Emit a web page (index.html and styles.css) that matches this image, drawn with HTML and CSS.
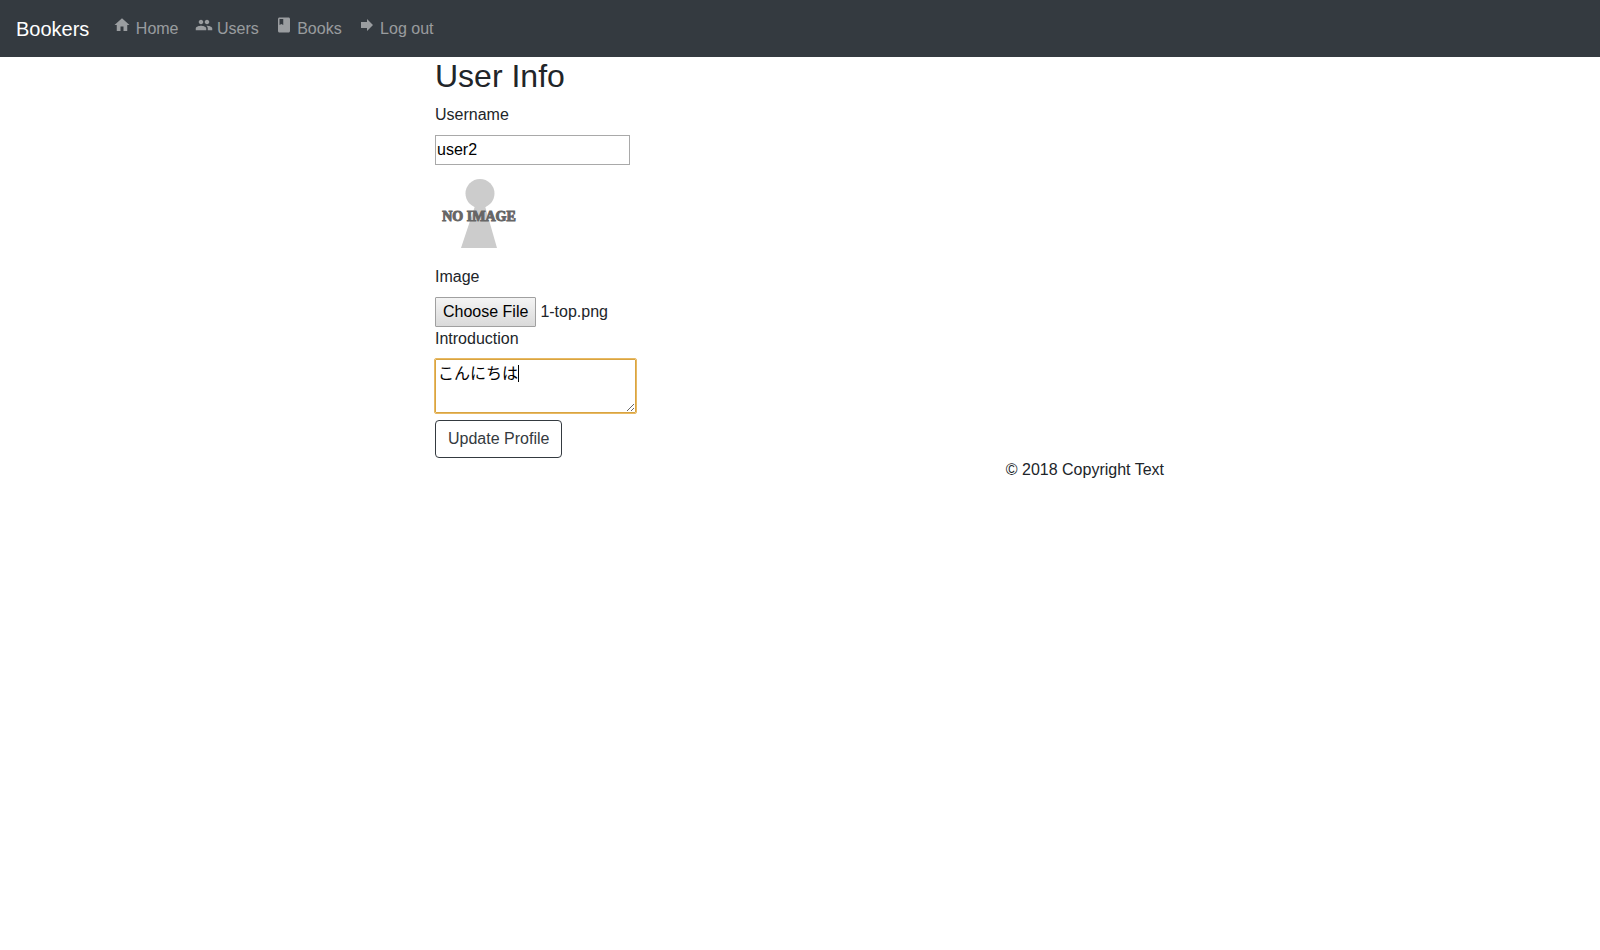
FILE: index.html
```html
<!DOCTYPE html>
<html lang="en">
<head>
<meta charset="utf-8">
<title>Bookers</title>
<link rel="stylesheet" href="styles.css">
</head>
<body>
<header>
  <nav class="navbar">
    <a class="brand" href="#">Bookers</a>
    <ul class="nav-list">
      <li><a class="nav-link" href="#"><svg class="icon" viewBox="0 0 24 24" aria-hidden="true"><path d="M10 20v-6h4v6h5v-8h3L12 3 2 12h3v8z"/></svg> Home</a></li>
      <li><a class="nav-link" href="#"><svg class="icon" viewBox="0 0 24 24" aria-hidden="true"><path d="M16 11c1.66 0 2.99-1.34 2.99-3S17.66 5 16 5s-3 1.340-3 3 1.340 3 3 3zm-8 0c1.660 0 2.990-1.340 2.990-3S9.660 5 8 5 5 6.340 5 8s1.340 3 3 3zm0 2c-2.330 0-7 1.170-7 3.500V19h14v-2.500c0-2.330-4.670-3.500-7-3.500zm8 0c-.29 0-.62.02-.97.05 1.160.84 1.970 1.970 1.970 3.450V19h6v-2.500c0-2.330-4.670-3.500-7-3.500z"/></svg> Users</a></li>
      <li><a class="nav-link" href="#"><svg class="icon" viewBox="0 0 24 24" aria-hidden="true"><path d="M18 2H6c-1.100 0-2 .9-2 2v16c0 1.100.9 2 2 2h12c1.100 0 2-.9 2-2V4c0-1.100-.9-2-2-2zM6 4h5v8l-2.500-1.500L6 12V4z"/></svg> Books</a></li>
      <li><a class="nav-link" href="#"><svg class="icon" viewBox="0 0 24 24" aria-hidden="true"><path d="M4 8h8V4l8 8-8 8v-4H4z"/></svg> Log out</a></li>
    </ul>
  </nav>
</header>
<main class="container">
  <form class="column">
    <h1 class="title">User Info</h1>
    <label class="label" for="username">Username</label>
    <input class="text-input" id="username" type="text" value="user2">
    <svg class="avatar" viewBox="0 0 90 100" role="img" aria-label="No image">
      <circle cx="45" cy="28.500" r="14.500"/>
      <path d="M40 41h10l12 42H26z"/>
      <text class="avatar-text" x="44" y="56" text-anchor="middle">NO IMAGE</text>
    </svg>
    <label class="label" for="image">Image</label>
    <div class="file-row">
      <input class="file-input" id="image" type="file">
      <label class="file-button" for="image">Choose File</label>
      <span>1-top.png</span>
    </div>
    <label class="label" for="introduction">Introduction</label>
    <div class="textarea-wrap">
      <textarea class="textarea" id="introduction" rows="2">こんにちは</textarea>
      <span class="caret" aria-hidden="true"></span>
    </div>
    <button class="button" type="button">Update Profile</button>
  </form>
</main>
<footer class="container">
  <div class="column copyright">© 2018 Copyright Text</div>
</footer>
</body>
</html>
```
FILE: styles.css
```css
*,
*::before,
*::after {
  box-sizing: border-box;
}

body {
  margin: 0;
  background: #fff;
  color: #212529;
  font: 16px/24px "Liberation Sans", "Noto Sans CJK JP", sans-serif;
}

.navbar {
  display: flex;
  align-items: center;
  gap: 16px;
  padding: 8px 16px;
  background: #343a40;
}

.brand {
  padding: 5px 0;
  color: #fff;
  font-size: 20px;
  line-height: 30px;
  text-decoration: none;
}

.nav-list {
  display: flex;
  margin: 0;
  padding: 0;
  list-style: none;
}

.nav-link {
  display: block;
  padding: 8px;
  color: rgba(255, 255, 255, 0.5);
  text-decoration: none;
}

.icon {
  width: 18px;
  height: 18px;
  fill: currentColor;
}

.container {
  max-width: 1140px;
  margin: 0 auto;
}

.column {
  display: flex;
  flex-direction: column;
  align-items: flex-start;
  width: 66.6667%;
  margin: 0 auto;
  padding: 0 15px;
}

.title {
  margin: 0 0 8px;
  font-size: 32px;
  font-weight: 400;
  line-height: 38px;
}

.label {
  margin-bottom: 8px;
}

.text-input {
  width: 195px;
  height: 30px;
  padding: 1px;
  border: 1px solid #a9a9a9;
  background: #fff;
  color: #000;
  font: inherit;
}

.avatar {
  width: 90px;
  height: 100px;
  fill: #ccc;
}

.avatar-text {
  fill: #666;
  stroke: #666;
  stroke-width: 1px;
  font: bold 14px "Liberation Serif", serif;
}

.file-row {
  display: flex;
  align-items: center;
  gap: 4px;
  position: relative;
}

.file-input {
  position: absolute;
  width: 1px;
  height: 1px;
  opacity: 0;
}

.file-button {
  padding: 2px 7px;
  border: 1px solid #a0a0a0;
  border-radius: 1px;
  background: linear-gradient(#f4f4f4, #dadada);
  color: #000;
}

.textarea-wrap {
  display: flex;
  position: relative;
  margin-bottom: 7px;
}

.textarea {
  width: 201px;
  height: 54px;
  padding: 2px;
  border: 1px solid #d9a441;
  outline: 1px solid #e8b963;
  outline-offset: 0;
  border-radius: 1px;
  background: #fff;
  color: #000;
  font: inherit;
}

.caret {
  position: absolute;
  top: 6px;
  left: 83px;
  width: 1px;
  height: 17px;
  background: #000;
}

.button {
  padding: 6px 12px;
  border: 1px solid #343a40;
  border-radius: 4px;
  background: transparent;
  color: #343a40;
  font: inherit;
}

.copyright {
  align-items: flex-end;
  padding-right: 16px;
}
```
